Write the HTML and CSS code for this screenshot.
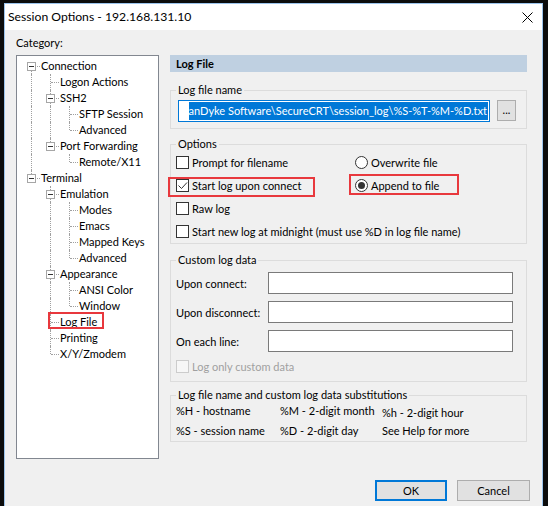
FILE: index.html
```html
<!DOCTYPE html>
<html>
<head>
<meta charset="utf-8">
<link rel="stylesheet" href="styles.css">
</head>
<body>
<div class="window">
  <div class="titlebar">
    <span class="title">Session Options - 192.168.131.10</span>
    <svg class="close" width="11" height="11" viewBox="0 0 11 11"><path d="M0.5 0.5L10.5 10.5M10.5 0.5L0.5 10.5" stroke="#000" stroke-width="1"/></svg>
  </div>
  <div class="content">
    <div class="category-label">Category:</div>
    <div class="tree">
      <div class="row"><span class="c f"><i class="exp"></i></span><span class="txt">Connection</span></div>
      <div class="row"><span class="c v"></span><span class="c t"></span><span class="txt">Logon Actions</span></div>
      <div class="row"><span class="c v"></span><span class="c t"><i class="exp"></i></span><span class="txt">SSH2</span></div>
      <div class="row"><span class="c v"></span><span class="c v"></span><span class="c t"></span><span class="txt">SFTP Session</span></div>
      <div class="row"><span class="c v"></span><span class="c v"></span><span class="c l"></span><span class="txt">Advanced</span></div>
      <div class="row"><span class="c v"></span><span class="c l"><i class="exp"></i></span><span class="txt">Port Forwarding</span></div>
      <div class="row"><span class="c v"></span><span class="c"></span><span class="c l"></span><span class="txt">Remote/X11</span></div>
      <div class="row"><span class="c l"><i class="exp"></i></span><span class="txt">Terminal</span></div>
      <div class="row"><span class="c"></span><span class="c t"><i class="exp"></i></span><span class="txt">Emulation</span></div>
      <div class="row"><span class="c"></span><span class="c v"></span><span class="c t"></span><span class="txt">Modes</span></div>
      <div class="row"><span class="c"></span><span class="c v"></span><span class="c t"></span><span class="txt">Emacs</span></div>
      <div class="row"><span class="c"></span><span class="c v"></span><span class="c t"></span><span class="txt">Mapped Keys</span></div>
      <div class="row"><span class="c"></span><span class="c v"></span><span class="c l"></span><span class="txt">Advanced</span></div>
      <div class="row"><span class="c"></span><span class="c t"><i class="exp"></i></span><span class="txt">Appearance</span></div>
      <div class="row"><span class="c"></span><span class="c v"></span><span class="c t"></span><span class="txt">ANSI Color</span></div>
      <div class="row"><span class="c"></span><span class="c v"></span><span class="c l"></span><span class="txt">Window</span></div>
      <div class="row marked"><span class="c"></span><span class="c t"></span><span class="txt">Log File</span></div>
      <div class="row"><span class="c"></span><span class="c t"></span><span class="txt">Printing</span></div>
      <div class="row"><span class="c"></span><span class="c l"></span><span class="txt">X/Y/Zmodem</span></div>
    </div>
    <div class="panel">
      <div class="panel-header">Log File</div>
      <fieldset class="group g-name">
        <legend>Log file name</legend>
        <div class="name-row">
          <div class="textbox focused"><span class="sel">anDyke Software\SecureCRT\session_log\%S-%T-%M-%D.txt</span></div>
          <div class="btn browse">...</div>
        </div>
      </fieldset>
      <fieldset class="group g-options">
        <legend>Options</legend>
        <div class="opt-grid">
          <div class="opt"><span class="cb"></span>Prompt for filename</div>
          <div class="opt"><span class="rb"></span>Overwrite file</div>
          <div class="opt mark mark-start"><span class="cb"><svg width="11" height="11" viewBox="0 0 11 11"><path d="M1.5 5.5L4.5 8.5L10 2.5" fill="none" stroke="#333" stroke-width="1"/></svg></span>Start log upon connect</div>
          <div class="opt mark mark-append"><span class="rb on"></span>Append to file</div>
          <div class="opt wide"><span class="cb"></span>Raw log</div>
          <div class="opt wide"><span class="cb"></span>Start new log at midnight (must use %D in log file name)</div>
        </div>
      </fieldset>
      <fieldset class="group g-custom">
        <legend>Custom log data</legend>
        <div class="custom-grid">
          <div class="clabel">Upon connect:</div><div class="textbox"></div>
          <div class="clabel">Upon disconnect:</div><div class="textbox"></div>
          <div class="clabel">On each line:</div><div class="textbox"></div>
        </div>
        <div class="opt disabled"><span class="cb"></span>Log only custom data</div>
      </fieldset>
      <fieldset class="group g-subs">
        <legend>Log file name and custom log data substitutions</legend>
        <div class="subs-grid">
          <div>%H - hostname</div><div>%M - 2-digit month</div><div class="low">%h - 2-digit hour</div>
          <div>%S - session name</div><div>%D - 2-digit day</div><div>See Help for more</div>
        </div>
      </fieldset>
    </div>
    <div class="buttons">
      <div class="btn dlg default">OK</div>
      <div class="btn dlg">Cancel</div>
    </div>
  </div>
</div>
</body>
</html>
```

FILE: styles.css
```css
html, body {
  margin: 0;
  padding: 0;
}
body {
  background: #0c0c0c;
  overflow: hidden;
  height: 506px;
  font-family: "Lato", "Liberation Sans", sans-serif;
  font-size: 11px;
  color: #000;
}
.window {
  margin: 3px 0 0 4px;
  width: 537px;
  height: 520px;
  border: 1px solid #9cc4ec;
  background: #f0f0f0;
}
.titlebar {
  height: 26px;
  background: #fff;
  display: flex;
  align-items: center;
  justify-content: space-between;
  padding: 0 9px 0 3px;
}
.title {
  font-size: 12.2px;
  line-height: 16px;
}
.close {
  display: block;
}
.content {
  display: grid;
  grid-template-columns: 143px 357px;
  grid-template-rows: 14px auto auto;
  column-gap: 11px;
  row-gap: 5px;
  padding: 6px 0 0 11px;
}
.category-label {
  grid-column: 1 / -1;
  line-height: 14px;
}
/* tree */
.tree {
  height: 400px;
  border: 1px solid #828790;
  background: #fff;
  padding: 2px 0 0 5px;
}
.row {
  display: flex;
  height: 16px;
  align-items: center;
  position: relative;
}
.txt {
  line-height: 16px;
  white-space: nowrap;
}
.c {
  flex: none;
  width: 19px;
  height: 16px;
  position: relative;
}
.c.v::before, .c.t::before, .c.l::before, .c.f::before {
  content: "";
  position: absolute;
  left: 9px;
  top: 0;
  bottom: 0;
  border-left: 1px dotted #a0a0a0;
}
.c.l::before { bottom: 8px; }
.c.f::before { top: 8px; }
.c.t::after, .c.l::after, .c.f::after {
  content: "";
  position: absolute;
  left: 10px;
  top: 8px;
  width: 8px;
  border-top: 1px dotted #a0a0a0;
}
.exp {
  position: absolute;
  left: 5px;
  top: 4px;
  width: 7px;
  height: 7px;
  border: 1px solid #a6a6a6;
  background: #fff;
  z-index: 1;
}
.exp::before {
  content: "";
  position: absolute;
  left: 1px;
  top: 3px;
  width: 5px;
  height: 1px;
  background: #333;
}
.row.marked::after {
  content: "";
  position: absolute;
  left: 26px;
  top: -2px;
  width: 52px;
  height: 13px;
  border: 2px solid #e8383d;
}
/* panel */
.panel {
  display: flex;
  flex-direction: column;
}
.panel-header {
  height: 17px;
  line-height: 17px;
  background: #bfd0e1;
  font-weight: bold;
  padding-left: 6px;
}
.group {
  margin: 0;
  min-width: 0;
  border: 1px solid #dcdcdc;
  padding: 0 0 0 5px;
}
.group legend {
  padding: 0 2px;
  line-height: 14px;
}
.g-name {
  margin-top: 11px;
  padding-bottom: 6px;
}
.name-row {
  display: flex;
  align-items: flex-start;
  margin-top: 3px;
  padding-left: 2px;
}
.textbox {
  box-sizing: border-box;
  height: 22px;
  background: #fff;
  border: 1px solid #7a7a7a;
}
.textbox.focused {
  width: 312px;
  border-color: #0078d7;
  padding: 1px;
  display: flex;
  justify-content: flex-end;
  overflow: hidden;
}
.sel {
  background: #0078d7;
  color: #fff;
  white-space: nowrap;
  line-height: 18px;
  padding-right: 1px;
}
.btn {
  box-sizing: border-box;
  background: #e1e1e1;
  border: 1px solid #adadad;
  display: flex;
  align-items: center;
  justify-content: center;
}
.browse {
  width: 19px;
  height: 21px;
  margin-left: 7px;
  line-height: 12px;
  align-items: flex-end;
  padding-bottom: 4px;
}
.g-options {
  margin-top: 8px;
}
.opt-grid {
  display: grid;
  grid-template-columns: 179px auto;
  grid-auto-rows: 23px;
}
.opt {
  display: flex;
  align-items: center;
  gap: 3px;
  white-space: nowrap;
}
.opt.wide {
  grid-column: 1 / -1;
}
.cb {
  box-sizing: border-box;
  width: 13px;
  height: 13px;
  border: 1px solid #333;
  background: #fff;
  flex: none;
  display: flex;
  align-items: center;
  justify-content: center;
}
.cb svg { display: block; }
.rb {
  box-sizing: border-box;
  width: 13px;
  height: 13px;
  border: 1px solid #333;
  border-radius: 50%;
  background: #fff;
  flex: none;
  display: flex;
  align-items: center;
  justify-content: center;
}
.rb.on::before {
  content: "";
  width: 7px;
  height: 7px;
  border-radius: 50%;
  background: #333;
}
.mark {
  position: relative;
  justify-self: start;
}
.mark::after {
  content: "";
  position: absolute;
  border: 2px solid #e8383d;
}
.mark-start::after {
  left: -8px;
  right: -14px;
  top: 3px;
  bottom: 0;
}
.mark-append::after {
  left: -6px;
  right: -20px;
  top: 0;
  bottom: 2px;
}
.g-custom {
  margin-top: 9px;
  padding-bottom: 4px;
}
.custom-grid {
  display: grid;
  grid-template-columns: 92px 245px;
  grid-auto-rows: 22px;
  row-gap: 7px;
  margin-top: 5px;
}
.clabel {
  display: flex;
  align-items: center;
}
.opt.disabled {
  height: 22px;
  margin-top: 3px;
  color: #a0a0a0;
}
.opt.disabled .cb {
  border-color: #cccccc;
  background: #f7f7f7;
}
.g-subs {
  margin-top: 6px;
  padding-bottom: 1px;
}
.subs-grid {
  display: grid;
  grid-template-columns: 104px 102px auto;
  grid-auto-rows: 18px;
  row-gap: 2px;
  line-height: 18px;
  white-space: nowrap;
}
.subs-grid .low {
  padding-top: 2px;
}
.buttons {
  grid-column: 1 / -1;
  display: flex;
  justify-content: flex-end;
  gap: 10px;
  margin: 16px -3px 0 0;
}
.dlg {
  width: 73px;
  height: 21px;
}
.dlg.default {
  border: 2px solid #0078d7;
  width: 72px;
}
```
